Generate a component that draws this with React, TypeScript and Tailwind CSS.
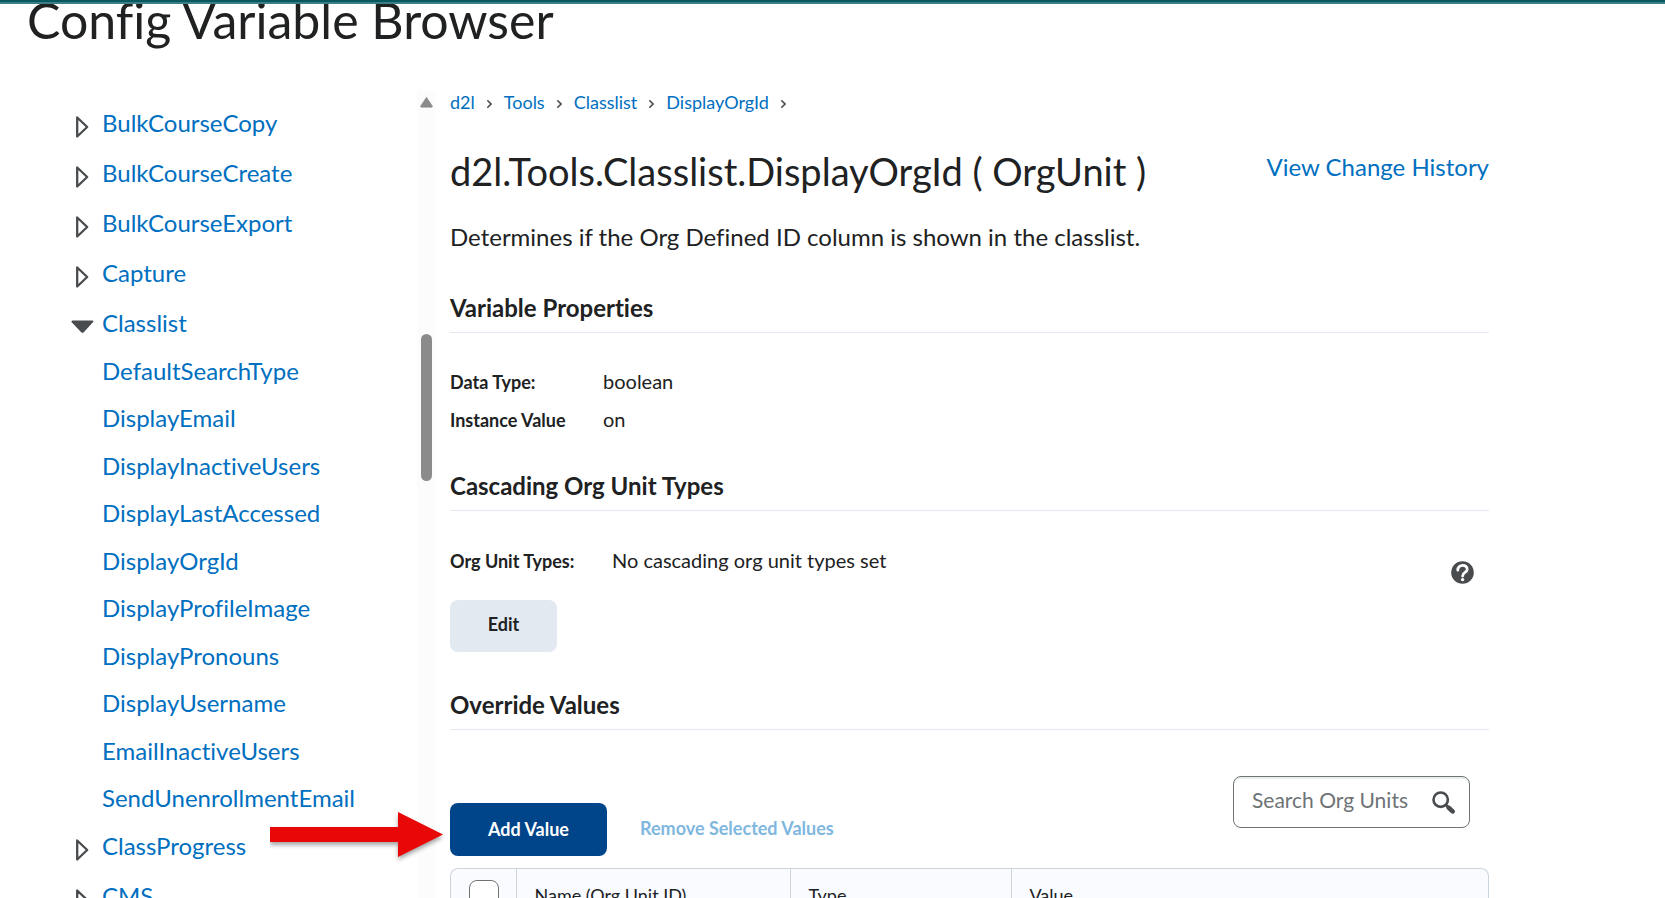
import React from "react";

const topFolders = ["BulkCourseCopy", "BulkCourseCreate", "BulkCourseExport", "Capture"];
const classlistVariables = [
  "DefaultSearchType",
  "DisplayEmail",
  "DisplayInactiveUsers",
  "DisplayLastAccessed",
  "DisplayOrgId",
  "DisplayProfileImage",
  "DisplayPronouns",
  "DisplayUsername",
  "EmailInactiveUsers",
  "SendUnenrollmentEmail",
];
const bottomFolders = ["ClassProgress", "CMS"];
const crumbs = ["d2l", "Tools", "Classlist", "DisplayOrgId"];

function Folder({ name, open = false }: { name: string; open?: boolean }) {
  return (
    <div className="flex h-[50px] items-center">
      <button type="button" aria-label={`Toggle ${name}`} className="flex w-[31px] pt-2">
        {open ? (
          <svg width="23" height="14" viewBox="0 0 23 14">
            <path d="M0.5 1.5 Q0.5 0.5 1.5 0.5 H21.5 Q22.5 0.5 22.3 1.7 L12.8 12.2 Q11.5 13.4 10.2 12.2 L0.7 2.2Z" fill="#494c4e" />
          </svg>
        ) : (
          <svg width="23" height="24" viewBox="0 0 23 24">
            <path d="M6.2 2.5 L16.200 12 L6.200 21.500Z" fill="#fff" stroke="#494c4e" strokeWidth="2.3" strokeLinejoin="round" />
          </svg>
        )}
      </button>
      <a href="#" className="leading-8">{name}</a>
    </div>
  );
}

function SectionHeading({ children }: { children: React.ReactNode }) {
  return (
    <h3 className="border-b border-[#e3e9f1] pb-2 text-[24px] leading-8 font-bold">{children}</h3>
  );
}

export default function App() {
  return (
    <div className="flex h-screen flex-col overflow-hidden bg-white font-[Lato,sans-serif] text-[#202122] [font-variant-ligatures:none]">
      <header className="relative z-10 h-1 shrink-0 border-b-2 border-[#3a7f84] bg-[#06595f]" />
      <h1 className="px-[27px] text-[50px] leading-8">Config Variable Browser</h1>

      <div className="mt-[55px] flex min-h-0 flex-1">
        <nav aria-label="Variables" className="w-[417px] shrink-0 pt-[7px] pl-[71px] text-[24px] text-[#006fbf]">
          {topFolders.map((name) => (
            <Folder key={name} name={name} />
          ))}
          <Folder name="Classlist" open />
          <ul className="-my-px grid h-[475px] auto-rows-fr pl-[31px]">
            {classlistVariables.map((name) => (
              <li key={name} className="flex items-center">
                <a href="#">{name}</a>
              </li>
            ))}
          </ul>
          {bottomFolders.map((name) => (
            <Folder key={name} name={name} />
          ))}
        </nav>

        <div className="flex w-[19px] shrink-0 flex-col items-center bg-[#fcfcfc] pt-1.5">
          <svg width="13" height="11" viewBox="0 0 13 11">
            <path d="M6.5 0.3 L12.3 8.9 Q12.6 10.2 11.6 10.2 H1.4 Q0.4 10.2 0.7 8.9Z" fill="#8b8b8b" stroke="#8b8b8b" strokeWidth="0.6" />
          </svg>
          <div className="mt-[226px] h-[147px] w-[11px] rounded-full bg-[#8b8b8b]" />
        </div>

        <main className="mr-[176px] ml-3.5 min-w-0 flex-1">
          <nav aria-label="Breadcrumb" className="flex h-[22px] items-center gap-3 text-[18px] leading-[22px]">
            {crumbs.map((crumb) => (
              <React.Fragment key={crumb}>
                <a href="#" className="text-[#006fbf]">{crumb}</a>
                <svg width="5" height="8" viewBox="0 0 5 8" className="mt-1">
                  <path d="M0.8 0.8 L4 4 L0.8 7.2" fill="none" stroke="#494c4e" strokeWidth="1.6" strokeLinecap="round" />
                </svg>
              </React.Fragment>
            ))}
          </nav>

          <div className="mt-8 flex items-start justify-between">
            <h2 className="text-[38px] leading-[52px]">d2l.Tools.Classlist.DisplayOrgId ( OrgUnit )</h2>
            <a href="#" className="mt-1 text-[24px] leading-9 text-[#006fbf]">View Change History</a>
          </div>
          <p className="mt-6 text-[24px] leading-8">
            Determines if the Org Defined ID column is shown in the classlist.
          </p>

          <section className="mt-[39px]">
            <SectionHeading>Variable Properties</SectionHeading>
            <dl className="mt-8 grid grid-cols-[153px_1fr] items-baseline gap-y-[5px] text-[20px] leading-8">
              <dt className="text-[18px] font-bold">Data Type:</dt>
              <dd>boolean</dd>
              <dt className="text-[18px] font-bold">Instance Value</dt>
              <dd>on</dd>
            </dl>
          </section>

          <section className="mt-[34px]">
            <SectionHeading>Cascading Org Unit Types</SectionHeading>
            <div className="mt-[33px] flex items-baseline text-[20px] leading-8">
              <span className="w-[162px] text-[18px] font-bold">Org Unit Types:</span>
              <span>No cascading org unit types set</span>
              <button type="button" aria-label="Help" className="mt-[17px] mr-[15px] -mb-4 ml-auto self-start">
                <svg width="23" height="23" viewBox="0 0 23 23">
                  <circle cx="11.5" cy="11.5" r="11.3" fill="#494c4e" />
                  <path d="M6.8 9.2 C6.8 2.6 16.6 3 16.2 8.4 C16 11.8 11.6 11 11.6 15" fill="none" stroke="#fff" strokeWidth="2.8" strokeLinecap="round" />
                  <circle cx="11.6" cy="18.6" r="1.7" fill="#fff" />
                </svg>
              </button>
            </div>
            <button type="button" className="mt-[23px] h-[52px] w-[107px] rounded-lg bg-[#e3e9f1] pb-1 text-[18px] font-bold">
              Edit
            </button>
          </section>

          <section className="mt-[37px]">
            <SectionHeading>Override Values</SectionHeading>
            <form className="mt-[46px] mr-[19px] ml-auto flex h-[52px] w-[237px] items-center rounded-lg border border-[#6e7376] pr-3.5 pl-[18px] shadow-[inset_0_2px_0_0_#eceef0]">
              <input
                type="text"
                aria-label="Search Org Units"
                placeholder="Search Org Units"
                className="min-w-0 flex-1 bg-transparent pb-1 text-[21px] leading-8 outline-none placeholder:text-[#6e7376]"
              />
              <button type="button" aria-label="Search">
                <svg width="23" height="23" viewBox="0 0 23 23">
                  <circle cx="8.7" cy="8.7" r="7.2" fill="none" stroke="#494c4e" strokeWidth="2.6" />
                  <path d="M14 14 L15.5 15.5" stroke="#494c4e" strokeWidth="2.6" />
                  <path d="M16.6 16.6 L20.6 20.4" stroke="#494c4e" strokeWidth="4.6" strokeLinecap="round" />
                </svg>
              </button>
            </form>
            <div className="relative -mt-[25px] flex w-fit items-center">
              <button type="button" className="h-[53px] w-[157px] rounded-lg bg-[#004489] text-[18px] font-bold text-white">
                Add Value
              </button>
              <button type="button" disabled className="ml-[33px] pb-0.5 text-[18px] font-bold text-[#80b7df]">
                Remove Selected Values
              </button>
              <svg width="180" height="56" viewBox="0 0 180 56" className="absolute top-[7px] right-full" aria-hidden="true">
                <path d="M0 17 H128 V2 L173 24.500 L128 47 V32 H0Z" fill="#e90808" className="drop-shadow-[0_3px_2px_rgb(0_0_0/0.35)]" />
              </svg>
            </div>
            <div className="mt-3 overflow-hidden rounded-t-lg border border-b-0 border-[#cdd5dc] bg-[#f9fbff]">
              <table className="w-full table-fixed border-collapse text-left text-[18px]">
                <thead>
                  <tr className="h-[52px]">
                    <th className="w-[65px] border-r border-[#cdd5dc] pl-[18px]">
                      <input type="checkbox" aria-label="Select all rows" className="block size-[30px] appearance-none rounded-lg border border-[#6e7376] bg-white" />
                    </th>
                    <th className="w-[274px] border-r border-[#cdd5dc] pl-[18px] font-normal">Name (Org Unit ID)</th>
                    <th className="w-[221px] border-r border-[#cdd5dc] pl-[18px] font-normal">Type</th>
                    <th className="pl-[18px] font-normal">Value</th>
                  </tr>
                </thead>
              </table>
            </div>
          </section>
        </main>
      </div>
    </div>
  );
}
